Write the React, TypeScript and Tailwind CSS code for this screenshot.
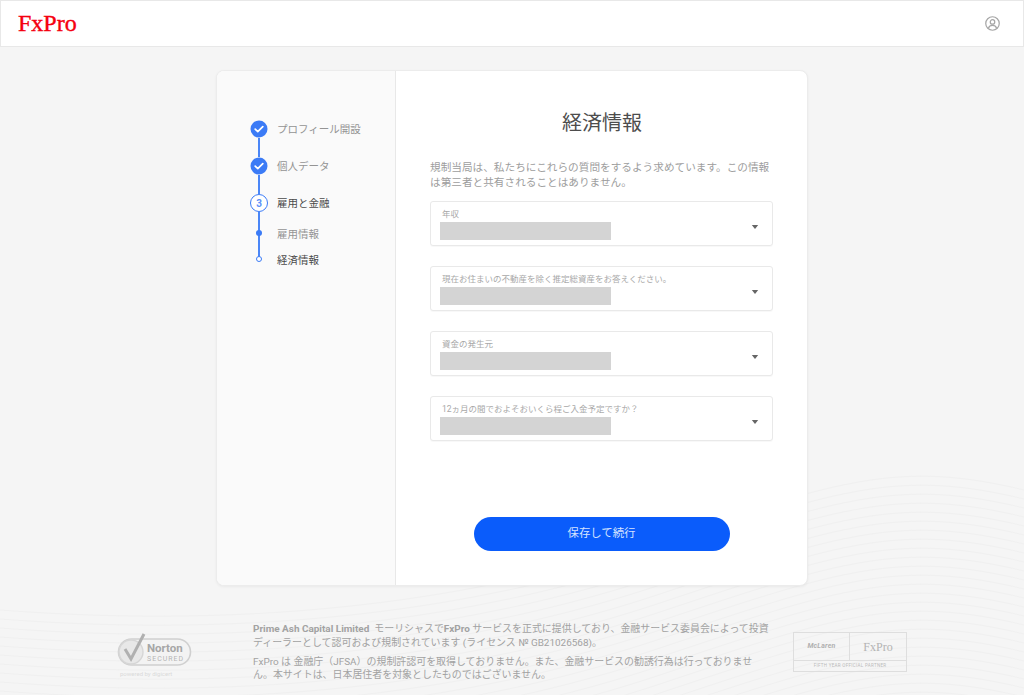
import React from "react";

const sans = 'font-["Roboto","Noto_Sans_CJK_JP",sans-serif]';

function Check() {
  return (
    <svg viewBox="0 0 18 18" className="w-[18px] h-[18px] shrink-0">
      <circle cx="9" cy="9" r="8.5" fill="#3b7bf6" />
      <path d="M5.2 9.2l2.6 2.5 5-5" fill="none" stroke="#fff" strokeWidth="1.7" strokeLinecap="round" strokeLinejoin="round" />
    </svg>
  );
}

function Line({ h }: { h: string }) {
  return <div className={`w-[1.5px] ml-[8.25px] bg-[#4a86f7] ${h}`} />;
}

function Field({ label }: { label: string }) {
  return (
    <div className="h-[45px] rounded-[3px] border border-[#e9e9e9] bg-white relative pl-[9px] shadow-[0_1px_1px_rgba(0,0,0,0.03)]">
      <div className="text-[8.5px] leading-[12px] text-[#a8a8a8] pt-[6px] pl-[2px]">{label}</div>
      <div className="w-[171px] h-[18px] bg-[#d4d4d4] mt-[2px]" />
      <svg viewBox="0 0 8 5" className="absolute right-[13px] top-[23px] w-[8px] h-[4px]">
        <path d="M0 0h8L4 5z" fill="#666" />
      </svg>
    </div>
  );
}

function Waves() {
  const lines = [];
  for (let i = 0; i < 26; i++) {
    const y = 480 + i * 9;
    lines.push(
      <path key={i} d={`M0 ${y + 130} C 260 ${y + 150}, 480 ${y + 120}, 660 ${y + 60} S 900 ${y - 20}, 1024 ${y + 10}`} fill="none" stroke="#f0f0f0" strokeWidth="1" />
    );
  }
  return (
    <svg viewBox="0 0 1024 695" className="absolute inset-0 w-[1024px] h-[695px] pointer-events-none">
      {lines}
    </svg>
  );
}

export default function App() {
  return (
    <div className={`relative w-[1024px] h-[695px] overflow-hidden bg-[#f5f5f5] ${sans}`}>
      <Waves />
      <header className="relative h-[47px] bg-white border border-[#e8e8e8] flex items-center justify-between pl-[17px] pr-[23px]">
        <span className='font-["Liberation_Serif",serif] text-[24px] leading-none -mt-[2px] text-[#f5000f] [-webkit-text-stroke:0.4px_#f5000f]'>FxPro</span>
        <svg viewBox="0 0 16 16" className="w-[15px] h-[15px]" fill="none" stroke="#a6a6a6" strokeWidth="1.3">
          <circle cx="8" cy="8" r="7.2" />
          <circle cx="8" cy="6.3" r="2.4" />
          <path d="M3.6 13c.8-2.2 2.5-3 4.4-3s3.6.8 4.4 3" />
        </svg>
      </header>

      <main className="relative w-[592px] h-[516px] ml-[216px] mt-[23px] bg-white rounded-[8px] border border-[#ececec] shadow-[0_1px_3px_rgba(0,0,0,0.05)] flex overflow-hidden">
        <aside className="w-[179px] shrink-0 bg-[#fafafa] border-r border-[#e8e8e8] pt-[49px] pl-[33px]">
          <div className="flex items-center h-[18px] gap-[9px]">
            <Check />
            <span className="text-[10.5px] pt-[1px] text-[#949494]">プロフィール開設</span>
          </div>
          <Line h="h-[19px]" />
          <div className="flex items-center h-[18px] gap-[9px]">
            <Check />
            <span className="text-[10.5px] pt-[1px] text-[#949494]">個人データ</span>
          </div>
          <Line h="h-[19px]" />
          <div className="flex items-center h-[18px] gap-[9px]">
            <div className="w-[18px] h-[18px] rounded-full border-[1.5px] border-[#3b7bf6] bg-white flex items-center justify-center text-[10px] font-bold text-[#5a90f8] shrink-0">3</div>
            <span className="text-[10.5px] pt-[1px] text-[#4a4a4a]">雇用と金融</span>
          </div>
          <div className="relative h-[57px]">
            <Line h="h-[49px]" />
            <div className="absolute left-[6px] top-[18px] w-[6px] h-[6px] rounded-full bg-[#3b7bf6]" />
            <div className="absolute left-[6px] top-[44px] w-[6px] h-[6px] rounded-full bg-white border-[1.5px] border-[#3b7bf6]" />
            <span className="absolute left-[27px] top-[16px] text-[10.5px] leading-[14px] text-[#949494]">雇用情報</span>
            <span className="absolute left-[27px] top-[42px] text-[10.5px] leading-[14px] text-[#4a4a4a]">経済情報</span>
          </div>
        </aside>
        <section className="flex-1 flex flex-col pl-[34px] pr-[34px]">
          <h1 className="text-[20px] leading-[28px] text-[#4d4d4d] text-center mt-[38px] pl-[1px]">経済情報</h1>
          <p className="text-[10.65px] leading-[15px] text-[#9d9d9d] mt-[23px] mb-[11px]">
            規制当局は、私たちにこれらの質問をするよう求めています。この情報は第三者と共有されることはありません。
          </p>
          <div className="flex flex-col gap-[20px]">
            <Field label="年収" />
            <Field label="現在お住まいの不動産を除く推定総資産をお答えください。" />
            <Field label="資金の発生元" />
            <Field label="12ヵ月の間でおよそおいくら程ご入金予定ですか？" />
          </div>
          <button className="self-center w-[256px] h-[34px] mt-[76px] rounded-full bg-[#0a5cfb] text-[11.4px] text-[#d5e3ff]">保存して続行</button>
        </section>
      </main>

      <footer className="relative flex mt-[37px] pl-[117px]">
        <svg viewBox="0 0 76 50" className="w-[76px] h-[50px] mt-[9px] shrink-0 mr-[60px]">
          <rect x="1.5" y="7" width="72" height="26" rx="13" fill="#f3f3f3" stroke="#d0d0d0" strokeWidth="1.6" />
          <circle cx="14" cy="20" r="12" fill="#e8e8e8" stroke="#d6d6d6" strokeWidth="1.4" />
          <path d="M8 17l6 10L27 2" fill="none" stroke="#b0b0b0" strokeWidth="3" />
          <text x="30" y="20" fontSize="11.5" fontWeight="700" fill="#a6a6a6">Norton</text>
          <text x="30" y="29" fontSize="7" letterSpacing="1" fill="#b5b5b5">SECURED</text>
          <text x="3" y="44" fontSize="6" fill="#dadada">powered by digicert</text>
        </svg>
        <div className="w-[519px] shrink-0 text-[9.95px] text-[#a2a2a2]">
          <p className="mt-[-1px] leading-[14px]"><b className="font-bold">Prime Ash Capital Limited</b>&nbsp;&nbsp;モーリシャスで<b className="font-bold">FxPro</b> サービスを正式に提供しており、金融サービス委員会によって投資ディーラーとして認可および規制されています (ライセンス № GB21026568)。</p>
          <p className="mt-[5px] leading-[13px] w-[508px]">FxPro は 金融庁（JFSA）の規制許認可を取得しておりません。また、金融サービスの勧誘行為は行っておりません。本サイトは、日本居住者を対象としたものではございません。</p>
        </div>
        <div className="ml-[21px] w-[114px] h-[40px] mt-[9px] border border-[#dedede] flex flex-col shrink-0">
          <div className="flex h-[28px] border-b border-[#dedede]">
            <div className="w-[56px] border-r border-[#dedede] flex items-center justify-center text-[7px] font-bold italic tracking-[0.2px] text-[#b0b0b0]">McLaren</div>
            <div className='flex-1 flex items-center justify-center font-["Liberation_Serif",serif] text-[12px] text-[#b3b3b3]'>FxPro</div>
          </div>
          <div className="flex-1 flex items-center justify-center text-[4.5px] tracking-[0.3px] text-[#bbb]">FIFTH YEAR OFFICIAL PARTNER</div>
        </div>
      </footer>
    </div>
  );
}
